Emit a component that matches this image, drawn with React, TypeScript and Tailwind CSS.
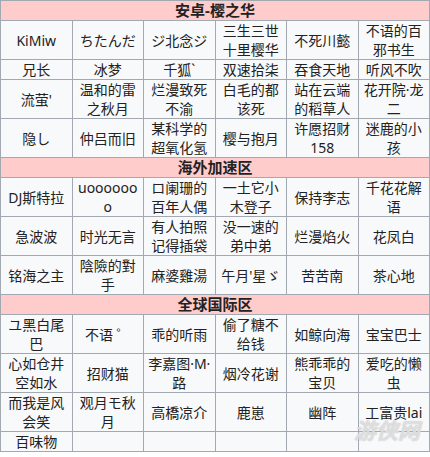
import React from 'react';

type Section = {
  title: string;
  rows: string[][];
};

const sections: Section[] = [
  {
    title: '安卓-樱之华',
    rows: [
      ['KiMiw', 'ちたんだ', 'ジ北念ジ', '三生三世十里樱华', '不死川懿', '不语的百邪书生'],
      ['兄长', '冰梦', '千狐`', '双速拾柒', '吞食天地', '听风不吹'],
      ['流萤\'', '温和的雷之秋月', '烂漫致死不渝', '白毛的都该死', '站在云端的稻草人', '花开院·龙二'],
      ['隐し', '仲吕而旧', '某科学的超氧化氢', '樱与抱月', '许愿招财158', '迷鹿的小孩'],
    ],
  },
  {
    title: '海外加速区',
    rows: [
      ['DJ斯特拉', 'uooooooo', 'ロ阑珊的百年人偶', '一土它小木登子', '保持李志', '千花花解语'],
      ['急波波', '时光无言', '有人拍照记得插袋', '没一速的弟中弟', '烂漫焰火', '花凤白'],
      ['铭海之主', '陰險的對手', '麻婆雞湯', '午月\'星ゞ', '苦苦南', '茶心地'],
    ],
  },
  {
    title: '全球国际区',
    rows: [
      ['ユ黑白尾巴', '不语 ゜', '乖的听雨', '偷了糖不给钱', '如鲸向海', '宝宝巴士'],
      ['心如仓井空如水', '招财猫', '李嘉图·M·路', '烟冷花谢', '熊乖乖的宝贝', '爱吃的懒虫'],
      ['而我是风会笑', '观月モ秋月', '高橋凉介', '鹿崽', '幽阵', '工富贵lai'],
      ['百味物', '', '', '', '', ''],
    ],
  },
];

export default function App() {
  return (
    <div
      className="relative w-[430px] h-[457px] bg-white overflow-hidden text-[#222]"
      style={{ fontFamily: '"Noto Sans", "Noto Sans CJK SC", sans-serif' }}
    >
      <table className="w-[430px] table-fixed border-collapse border border-[#a2a9b1] bg-[#f8f9fa]">
        <tbody>
          {sections.map((section) => (
            <React.Fragment key={section.title}>
              <tr>
                <th
                  colSpan={6}
                  className="border border-[#a2a9b1] bg-[#ffcccc] text-[15px] leading-[19px] font-bold text-center p-0"
                >
                  {section.title}
                </th>
              </tr>
              {section.rows.map((row, i) => (
                <tr key={i}>
                  {row.map((cell, j) => (
                    <td
                      key={j}
                      className="border border-[#a2a9b1] text-[14px] leading-[19px] text-center px-[3px] py-0 [overflow-wrap:anywhere] align-middle"
                    >
                      {cell || '\u00a0'}
                    </td>
                  ))}
                </tr>
              ))}
            </React.Fragment>
          ))}
        </tbody>
      </table>

      {/* watermark */}
      <span className="absolute left-[354px] top-[414px] text-[22px] font-bold italic text-white/60 [text-shadow:0_0_1px_#aaa] pointer-events-none">
        游侠网
      </span>
    </div>
  );
}
